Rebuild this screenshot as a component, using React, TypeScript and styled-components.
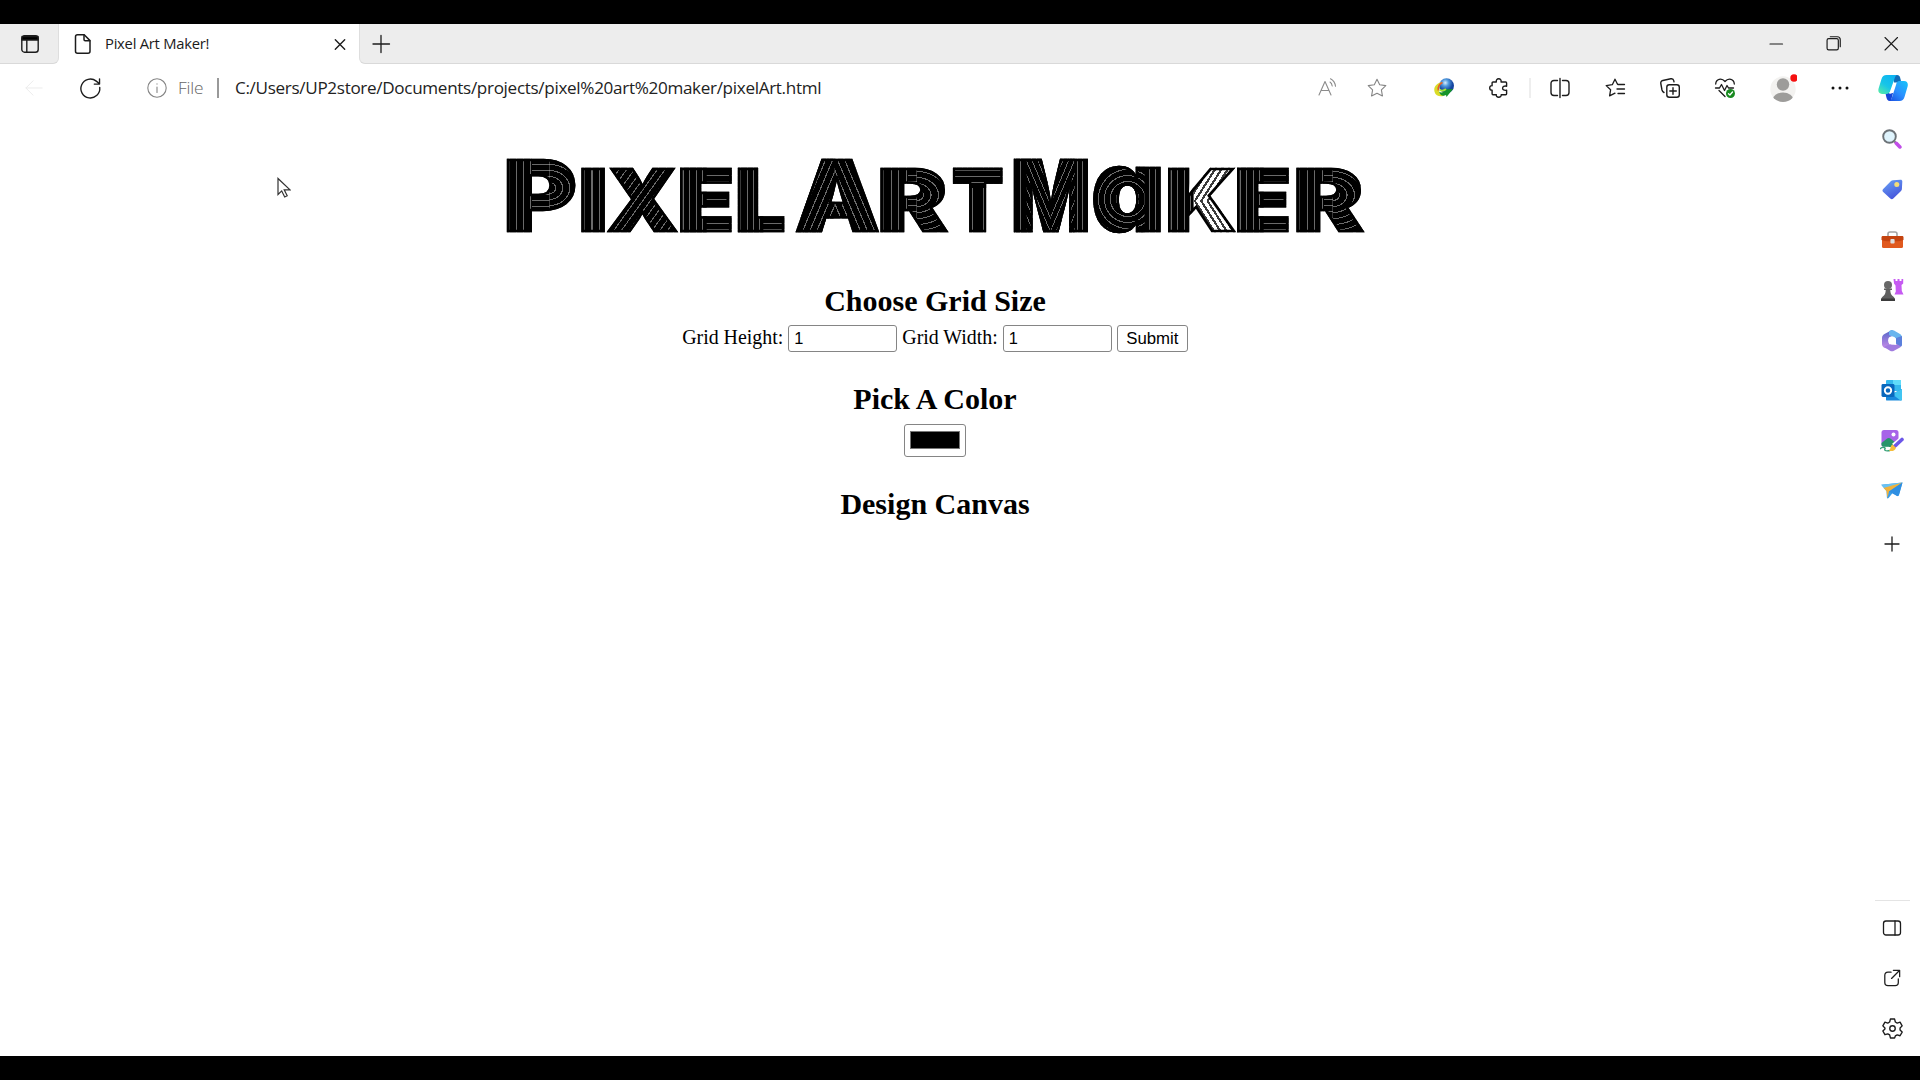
import React from "react";
import styled, { createGlobalStyle } from "styled-components";

const Global = createGlobalStyle`
  * { box-sizing: border-box; }
  body { margin: 0; background: #000; }
`;

const ui = `"Open Sans", "Noto Sans", sans-serif`;
const serif = `"Liberation Serif", "Times New Roman", serif`;
const sans = `"Liberation Sans", Arial, sans-serif`;

const Screen = styled.div`
  width: 1920px; height: 1080px; padding: 24px 0;
  background: #000; overflow: hidden;
`;
const Window = styled.div`
  height: 1032px; background: #fff;
  display: flex; flex-direction: column;
`;
const TabStrip = styled.header`
  height: 40px; flex: none; display: flex; background: #fff;
`;
const StripLeft = styled.div`
  width: 59px; background: #ededed; border-bottom: 1px solid #d9d9d9;
  border-right: 1px solid #dedede; border-radius: 0 0 6px 0;
  display: flex; align-items: center; justify-content: center; padding-left: 2px;
`;
const Tab = styled.div`
  width: 300px; background: #fff; display: flex; align-items: center;
  padding: 0 9px 0 14px; font: 400 14.8px ${ui}; color: #1b1b1b;
`;
const TabTitle = styled.span`
  margin-left: 12px; flex: 1; padding-bottom: 2px; letter-spacing: -0.26px; white-space: nowrap;
`;
const TabClose = styled.span`
  width: 20px; display: flex; justify-content: center;
`;
const StripRight = styled.div`
  flex: 1; background: #ededed; border-bottom: 1px solid #d9d9d9;
  border-left: 1px solid #dedede; border-radius: 0 0 0 6px;
  display: flex; align-items: center; justify-content: space-between; padding: 0 21px 0 11px;
`;
const Controls = styled.div`
  display: flex; align-items: center; gap: 42px;
`;
const Toolbar = styled.div`
  height: 48px; flex: none; display: flex; align-items: center; padding-left: 16px;
`;
const Slot = styled.span<{ $gap?: number }>`
  width: 30px; height: 30px; flex: none; margin-left: ${(p) => p.$gap ?? 0}px;
  display: flex; align-items: center; justify-content: center;
`;
const Scheme = styled.span`
  width: 30px; margin-left: 6px; padding-bottom: 2px; font: 300 17.3px ${ui}; color: #666; white-space: nowrap; letter-spacing: -0.2px;
`;
const Divider = styled.span<{ $gap: number; $tone: string; $w: number }>`
  width: ${(p) => p.$w}px; height: 20px; margin-left: ${(p) => p.$gap}px; background: ${(p) => p.$tone};
`;
const Address = styled.span`
  flex: 1; margin-left: 16px; padding-bottom: 2px; font: 400 17.1px ${ui}; color: #222; white-space: nowrap; letter-spacing: -0.32px;
`;
const ToolGroup = styled.div`
  display: flex; align-items: center; margin-right: 12px;
`;
const Body = styled.div`
  flex: 1; display: flex; min-height: 0;
`;
const Page = styled.main`
  width: 1870px; display: flex; flex-direction: column; align-items: center;
  font-family: ${serif}; color: #000; position: relative;
`;
const Title = styled.h1`
  margin: 31px 0 0; height: 93px; width: 858px; display: flex; align-items: baseline;
  font: 900 85px/92px Inter, Lato, sans-serif;
`;
const Word = styled.span`
  display: flex; align-items: baseline; flex: none;
`;
const Glyph = styled.span<{ $pitch: number; $stretch: number; $shift: number; $size?: number; $paint: string }>`
  display: block; flex: none; width: 95px; margin-right: ${(p) => p.$pitch - 95}px;
  font-size: ${(p) => p.$size ?? 85}px;
  transform: translateX(${(p) => p.$shift}px) scaleX(${(p) => p.$stretch}); transform-origin: 0 0;
  background: ${(p) => p.$paint};
  -webkit-background-clip: text; background-clip: text;
  color: transparent; -webkit-text-stroke: 2.5px #000;
  font-feature-settings: "cv11", "ss01";
`;
const Heading = styled.h2<{ $top: number }>`
  margin: ${(p) => p.$top}px 0 0; font: 700 30px/34px ${serif};
`;
const Form = styled.form`
  display: flex; align-items: center; height: 27px; margin-top: 7px;
  font-size: 19.9px; line-height: 27px; white-space: nowrap;
`;
const FieldLabel = styled.label`
  padding-bottom: 2px;
`;
const NumberBox = styled.input`
  width: 109px; height: 27px; margin: 0 5px; padding: 0 5px; border: 1px solid #858585; border-radius: 3px;
  background: #fff; color: #000; font: 16.4px ${sans}; outline: 0;
`;
const Submit = styled.button`
  width: 71px; height: 27px; padding: 0; border: 1px solid #858585; border-radius: 3px;
  background: #fff; color: #000; font: 16.8px ${sans};
`;
const ColorBox = styled.div`
  width: 62px; height: 33px; margin-top: 8px; padding: 6px 5px 7px;
  border: 1px solid #858585; border-radius: 3px; display: flex;
`;
const Swatch = styled.span`
  flex: 1; background: #000; border: 1px solid #777;
`;
const Pointer = styled.svg`
  position: absolute; left: 277px; top: 65px;
`;
const Sidebar = styled.aside`
  width: 50px; padding: 2px 6px 3px 0; display: flex; flex-direction: column; align-items: center;
`;
const SideSlot = styled.span<{ $h?: number }>`
  height: ${(p) => p.$h ?? 50}px; flex: none; display: flex; align-items: center; justify-content: center;
`;
const Rule = styled.span`
  width: 35px; height: 1px; background: #e4e4e4; margin: auto 0 2px;
`;

type IconProps = { s?: number; c?: string; w?: number; box?: number; children: React.ReactNode };
const Svg = styled.svg`
  overflow: visible; flex: none;
`;
const Icon = ({ s = 20, c = "#1c1c1c", w = 1.3, box = 20, children }: IconProps) => (
  <Svg width={s} height={s} viewBox={`0 0 ${box} ${box}`} fill="none" stroke={c} strokeWidth={w}
    strokeLinecap="round" strokeLinejoin="round">{children}</Svg>
);

const starPath = "M10 1.2l2.7 5.5 6.1.9-4.4 4.2 1 6.1L10 15.2l-5.4 2.7 1-6.1L1.2 7.6l6.1-.9z";

const Copilot = () => (
  <svg width="30" height="28" viewBox="0 0 30 28">
    <defs>
      <linearGradient id="cpA" x1="0" y1="1" x2=".7" y2="0"><stop stopColor="#5cf0a0" /><stop offset=".5" stopColor="#18c5e8" /><stop offset="1" stopColor="#0db4f2" /></linearGradient>
      <linearGradient id="cpB" x1="0" y1="1" x2=".8" y2="0"><stop stopColor="#1a4fe0" /><stop offset=".5" stopColor="#2b8fff" /><stop offset="1" stopColor="#19bdfb" /></linearGradient>
    </defs>
    <path d="M15 1h4c2.300 0 3 2 3.500 4l.8 3.500H16z" fill="#116cb8" />
    <path d="M7.500 19H15l-2 8h-1c-2.500 0-3.300-2-3.800-4.500z" fill="#1646d8" />
    <path d="M8.500 1H19c-1.500.6-2 2-2.500 3.800L12.500 16c-.6 2.500-1.800 4-4.500 4H4C.8 20-.2 17.500.6 14.500L3.500 5c.8-2.600 2.300-4 5-4z" fill="url(#cpA)" />
    <path d="M21.500 7H26c3.200 0 4.400 2.500 3.600 5.500L26.500 23c-.8 2.600-2.300 4-5 4H11.500c1.500-.6 2-2 2.500-3.800L18 11c.6-2.500 1.200-4 3.500-4z" fill="url(#cpB)" />
    <path d="M15.800 9.500H18c-.8 1-1 2-1.300 3L14.800 18c-.5 1-1.300 1.600-2.500 1.800H11c1-.8 1.500-2 2-3.500z" fill="#fff" />
  </svg>
);
const Download = () => (
  <svg width="20" height="20" viewBox="0 0 20 20">
    <defs><radialGradient id="globe" cx=".42" cy=".3"><stop stopColor="#d8efff" /><stop offset=".45" stopColor="#4f99dd" /><stop offset="1" stopColor="#1545a0" /></radialGradient></defs>
    <circle cx="12.500" cy="7.800" r="7.500" fill="url(#globe)" />
    <path d="M8 4C3 5-1 9 .6 14c1 4 5 5 9 4l1-3c-4 1-6 0-5.600-3C5 9 6 6 8 4z" fill="#d9dc28" />
    <path d="M8.500 4.500C5.500 6 3.700 9 4.300 12.500" stroke="#e85d2a" strokeWidth="1.500" fill="none" />
    <path d="M5 13.500c2 1.500 4 1 6-.5l-1-1.500 9-.5L12.500 19l-.5-2c-3 1.500-6 .5-7-3.500z" fill="#16942a" />
    <path d="M5.500 11.500c2 2 4 1.500 6.500-.5" stroke="#a4e534" strokeWidth="1.800" fill="none" />
  </svg>
);
const Search = () => (
  <svg width="20" height="20" viewBox="0 0 20 20">
    <path d="M12.500 12.500l2.200 2.200" stroke="#777" strokeWidth="2" />
    <path d="M14.300 14.300l3.600 3.600" stroke="#c14de8" strokeWidth="3.600" strokeLinecap="round" />
    <circle cx="7.500" cy="7.500" r="6.300" fill="#dff4fd" stroke="#6c7277" strokeWidth="1.900" />
  </svg>
);
const Tag = () => (
  <svg width="21" height="21" viewBox="0 0 21 21">
    <defs><linearGradient id="tag" x1="0" y1="0" x2=".5" y2="1"><stop stopColor="#6aa5f5" /><stop offset="1" stopColor="#4656dc" /></linearGradient></defs>
    <path d="M11 1.200L18.500.8c1.200 0 1.800.6 1.800 1.800l-.4 7.400c0 .8-.3 1.400-.9 2l-7.700 7.600c-1 1-2 1-3 0L1.200 13c-1-1-1-2 0-3L9 2c.6-.5 1.200-.8 2-.8z" fill="url(#tag)" />
    <circle cx="14.800" cy="5.500" r="2.500" fill="#f4dc78" />
  </svg>
);
const Toolbox = () => (
  <svg width="23" height="18" viewBox="0 0 23 18">
    <path d="M7 6V3c0-1.200.7-2 2-2h5c1.300 0 2 .8 2 2v3" fill="none" stroke="#a3a3a3" strokeWidth="1.600" />
    <rect x="1" y="5" width="21" height="12" rx="1.500" fill="#e0591e" />
    <path d="M.5 6.500c0-1 .5-1.500 1.500-1.500h19c1 0 1.500.5 1.500 1.500V9c-3 1-5 1.200-7 1.200h-8c-2 0-5-.2-7-1.200z" fill="#c4430f" />
    <rect x="9.400" y="8" width="4.200" height="4.500" rx="1" fill="#dedede" />
  </svg>
);
const Chess = () => (
  <svg width="24" height="24" viewBox="0 0 24 24">
    <path d="M13.500 1h2v2h2V1h2v2h2V1h1.700v4.500L21.500 7l.3 6 1.700 3.500h-9l1.300-3-.3-6-1.500-2z" fill="#c65af2" />
    <circle cx="8" cy="7" r="4" fill="#686868" />
    <path d="M4 10.500h8V12h-1.700c0 3 .7 5 3.500 7 .8.600 1.200 2.500.7 4h-13c-.5-1.500 0-3.400.7-4C5 17 5.700 15 5.700 12H4z" fill="#606060" />
    <path d="M1 20.500h14V23H1z" fill="#3b3b3b" />
  </svg>
);
const M365 = () => (
  <svg width="22" height="23" viewBox="0 0 22 23">
    <defs><linearGradient id="ma" x1="0" y1="0" x2="0" y2="1"><stop stopColor="#5366c8" /><stop offset="1" stopColor="#c58be8" /></linearGradient></defs>
    <path d="M11 1L3.500 5C1.800 6 1 7 1 9v6c0 2 1 3 2.500 3.800C6 20 8 18 8 16V9l7-4z" fill="url(#ma)" />
    <path d="M9 1.600c1.300-.8 2.700-.8 4 0L19 5c1.500 1 2 2 2 4v6c0 1-.3 2-1 2.500l-5-3V9.500L8 6V4c0-1 .3-1.900 1-2.400z" fill="#69b5ee" />
    <path d="M3 18l6-3 5.500 1L20.500 12v3c0 2-.6 3-2 3.800l-5.500 3c-1.300.7-2.700.7-4 0z" fill="#a07bdf" />
    <path d="M15 9l6-2v8c0 1-.4 2-1 2.500l-5-3z" fill="#5b80dc" />
    <circle cx="11" cy="11.500" r="3.900" fill="#fff" />
  </svg>
);
const Outlook = () => (
  <svg width="22" height="21" viewBox="0 0 22 21">
    <rect x="5" y="0" width="15" height="11" rx="1" fill="#36b9ee" /><rect x="12" y="0" width="8" height="5" fill="#60dcfa" />
    <path d="M5 9l8 4 8-4v10c0 1-.5 1.500-1.500 1.500H6c-1 0-1-.5-1-1.500z" fill="#1989dc" />
    <path d="M21 9v10c0 1-.5 1.500-1.500 1.500L11 14z" fill="#41c5f2" />
    <rect x=".5" y="4" width="13" height="13" rx="1.400" fill="#0968bd" />
    <circle cx="7" cy="10.500" r="3.200" fill="none" stroke="#fff" strokeWidth="1.900" />
  </svg>
);
const Designer = () => (
  <svg width="24" height="23" viewBox="0 0 24 23">
    <rect x="1.500" y="1" width="17" height="17" rx="2.500" fill="#a763e8" /><circle cx="13.500" cy="5.500" r="2" fill="#fff" />
    <path d="M1.500 14l5-4c1.500-1.200 3-1.200 4.500 0l6 5-3 3H4c-1.500 0-2.500-1-2.500-2.500z" fill="#27956a" />
    <path d="M0 19.300h9" stroke="#fff" strokeWidth="3" />
    <path d="M0 20c3-3 6-1 5 0s0 2.500 5 1.500" stroke="#36a178" strokeWidth="1.300" fill="none" />
    <path d="M22 10.500L14 17" stroke="#fff" strokeWidth="6" /><path d="M22 10.500L15 17" stroke="#6c57e8" strokeWidth="3.600" strokeLinecap="round" />
    <path d="M12.500 15.500l3.500 3.200c-.8 3-4 4-7 3 2-1.500 1-5 3.500-6.200z" fill="#f5bd3b" />
  </svg>
);
const Plane = () => (
  <svg width="22" height="17" viewBox="0 0 22 17">
    <path d="M.3 2.800L21.500.5 18 12.500c-.4 1.300-1.300 1.600-2.400 1l-4-2.500-4 5c-.8.700-1.600.500-1.700-.6L5.500 9z" fill="#3a9de8" />
    <path d="M.3 2.800L21.500.5 5.500 9z" fill="#69c2f4" /><path d="M2.500 6L21.500.5 8 9.500l-1.500 6.500L5.500 9z" fill="#f0b23c" /><path d="M21.500.5L8 9.500l8 4.500c1 .4 1.700 0 2-1z" fill="#2f8fe2" />
  </svg>
);

const line = "#000 0 5px, #6a6a6a 5px 6px";
const bars = `repeating-linear-gradient(90deg, ${line})`;
const rows = `repeating-linear-gradient(0deg, ${line})`;
const stemAndRows = `${bars} 0 0 / 27px 100% no-repeat, ${rows}`;
const bowl = (y: number, x: number) =>
  `${bars} 0 0 / 25px 100% no-repeat, ${rows} 25px 0 / ${x - 25}px 100% no-repeat, repeating-radial-gradient(circle at 0 ${y}px, ${line}) ${x}px 0 / 80px 100% no-repeat`;
const cross = `repeating-linear-gradient(124deg, ${line})`;
const peak = `repeating-linear-gradient(111deg, ${line}) 0 0 / 36px 100% no-repeat, repeating-linear-gradient(69deg, ${line})`;
const beam = `${rows} 0 0 / 100% 33px no-repeat, ${bars}`;
const valley = `${bars} 0 0 / 18px 100% no-repeat, repeating-linear-gradient(64deg, ${line}) 18px 0 / 28px 100% no-repeat, repeating-linear-gradient(116deg, ${line}) 46px 0 / 28px 100% no-repeat, ${bars}`;
const rings = `repeating-radial-gradient(circle at 37px 56px, ${line}) 0 0 / 54px 100% no-repeat, ${bars}`;
const chevron = "#fff 0 3px, #3c3c3c 3px 5px";
const arrow = `${bars} 0 0 / 26px 100% no-repeat, repeating-linear-gradient(120deg, ${chevron}) 26px 0 / 69px 46px no-repeat, repeating-linear-gradient(60deg, ${chevron}) 26px 46px / 69px 46px no-repeat`;

export default function App() {
  return (
    <Screen>
      <Global />
      <Window>
        <TabStrip>
          <StripLeft>
            <Icon s={18} box={18} w={1.4}><rect x=".8" y=".8" width="16.400" height="16.400" rx="2.800" /><path d="M1 1.500h16V5H1z" fill="#000" /><path d="M5.800 5v12" /></Icon>
          </StripLeft>
          <Tab>
            <Icon s={20} w={1.5}><path d="M4.500.8h6.700l5.800 5.800v10.600c0 1.200-.8 2-2 2h-10.500c-1.200 0-2-.8-2-2V2.800c0-1.200.8-2 2-2z" /><path d="M11 1v4.600c0 .8.400 1.200 1.200 1.200h4.600" /></Icon>
            <TabTitle>Pixel Art Maker!</TabTitle>
            <TabClose><Icon s={10} box={10} w={1.4}><path d="M.3.800l9.400 9.400M9.700.8L.3 10.200" /></Icon></TabClose>
          </Tab>
          <StripRight>
            <Icon s={20}><path d="M10 1.500v17M2 10h16.500" /></Icon>
            <Controls>
              <Icon s={16} box={16} w={1.200}><path d="M2 8h12.500" /></Icon>
              <Icon s={15} box={14} w={1.100}><rect x="1" y="2.500" width="10.500" height="10.500" rx="1.500" /><path d="M4 .7h6.500c1.800 0 2.800 1 2.800 2.800V10" /></Icon>
              <Icon s={16} box={16} w={1.100}><path d="M2 1.500l12.500 12.500M14.500 1.500L2 14" /></Icon>
            </Controls>
          </StripRight>
        </TabStrip>
        <Toolbar>
          <Slot $gap={3}><Icon s={18} c="#ececec" w={1.100}><path d="M19 10H1M9 2L1 10l8 8" /></Icon></Slot>
          <Slot $gap={26}><Icon s={21} w={1.300}><path d="M18.800 9A9 9 0 1 1 15.500 3L18.500 5.500M18.600.8v5h-5" /></Icon></Slot>
          <Slot $gap={37}><Icon s={20} c="#858585" w={1.100}><circle cx="10" cy="10" r="9.200" /><path d="M10 9v5.500M10 5.800v.3" /></Icon></Slot>
          <Scheme>File</Scheme>
          <Divider $gap={9} $tone="#999" $w={2} />
          <Address>C:/Users/UP2store/Documents/projects/pixel%20art%20maker/pixelArt.html</Address>
          <ToolGroup>
            <Slot><Icon s={20} c="#8c8c8c" w={1.100}><path d="M1 17L7 3.500 13 17M3 12.500h8M12 4c1.500 1 2 2.300 2.200 4M12.500.8c3.200 1.800 4.700 4.300 5 7.500" /></Icon></Slot>
            <Slot $gap={19}><Icon s={20} c="#858585" w={1.100}><path d={starPath} /></Icon></Slot>
            <Slot $gap={37}><Download /></Slot>
            <Slot $gap={25}><Icon s={20} w={1.400}><path d="M4 4h3.300C7 1.900 8 .8 9.700.8s2.700 1.100 2.400 3.200h4.600c.5 0 .9.400.9.900v3.300c-2.500-.5-4 .4-4 2s1.500 2.500 4 2v3.600c0 .5-.4.900-.9.900h-4.500c.2 1.500-.8 2.500-2.500 2.500s-2.700-1-2.400-2.500H4c-.5 0-.9-.4-.9-.9v-3.500C1.500 12.200.7 11.500.7 10s.8-2.500 2.400-2.300V4.900c0-.5.400-.9.900-.9z" /></Icon></Slot>
            <Divider $gap={15} $tone="#eeeeee" $w={2} />
            <Slot $gap={14}><Icon s={20} w={1.400}><path d="M7.500 2.500H4c-1.800 0-3 1.200-3 3v9c0 1.800 1.200 3 3 3h3.500M12.500 2.500H16c1.800 0 3 1.200 3 3v9c0 1.800-1.200 3-3 3h-3.500M10 .5v19" /></Icon></Slot>
            <Slot $gap={25}><Icon s={20} w={1.300}><path d="M12.500 6.300L10 1.200 7.300 6.700l-6.100.9 4.400 4.200-1 6.100L10 15.200M13 6.500h6.500M12 11h7.500M13 15.500h6.500" /></Icon></Slot>
            <Slot $gap={25}><Icon s={20} w={1.400}><rect x="6.800" y="6.800" width="12.500" height="12.500" rx="2.500" /><path d="M13 9.800v6.500M9.800 13h6.500M4 14.500c-1-.5-1.700-1.300-2-2.500L.8 5.500C.5 4 1.300 2.800 2.800 2.500l8-1.700c1.500-.3 2.700.500 3 2l.2 1" /></Icon></Slot>
            <Slot $gap={25}><Icon s={20} w={1.300}><path d="M.7 6C1 1 6.500-.5 10 3.500 13.500-.5 19 1 19.300 6M.5 10h4l2-3.500 3 6 2.500-5 1.500 2.500h5M4 12.500l6 6" /><circle cx="15.500" cy="15.500" r="4.500" fill="#188a20" stroke="none" /><path d="M13.500 15.700l1.400 1.300 2.600-3" stroke="#fff" /></Icon></Slot>
            <Slot $gap={28}>
              <svg width="28" height="28" viewBox="0 0 28 28"><defs><clipPath id="av"><circle cx="14" cy="15" r="13" /></clipPath></defs><circle cx="14" cy="15" r="12.700" fill="#f3f2f0" /><circle cx="14" cy="10.500" r="6.200" fill="#9d9c9a" /><ellipse cx="14" cy="26" rx="10.500" ry="7.500" fill="#9d9c9a" clipPath="url(#av)" /><circle cx="25" cy="4" r="3.700" fill="#f51010" /></svg>
            </Slot>
            <Slot $gap={27}><svg width="18" height="4" viewBox="0 0 18 4" fill="#111"><circle cx="2" cy="2" r="1.500" /><circle cx="9" cy="2" r="1.500" /><circle cx="16" cy="2" r="1.500" /></svg></Slot>
            <Slot $gap={23}><Copilot /></Slot>
          </ToolGroup>
        </Toolbar>
        <Body>
          <Page>
            <Title aria-label="Pixel Art Maker">
              <Word>
                <Glyph $pitch={75} $stretch={1.16} $shift={-3} $size={97} $paint={bowl(38, 40)}>P</Glyph>
                <Glyph $pitch={26} $stretch={1.22} $shift={-3} $paint={bars}>I</Glyph>
                <Glyph $pitch={73} $stretch={1.06} $shift={0} $paint={cross}>X</Glyph>
                <Glyph $pitch={58} $stretch={1.1} $shift={-3} $paint={stemAndRows}>E</Glyph>
                <Glyph $pitch={57} $stretch={1.05} $shift={-3} $paint={stemAndRows}>L</Glyph>
              </Word>
              <Word>
                <Glyph $pitch={85} $stretch={1.1} $shift={0} $size={97} $paint={peak}>A</Glyph>
                <Glyph $pitch={72} $stretch={1.24} $shift={-3} $paint={bowl(40, 32)}>R</Glyph>
                <Glyph $pitch={62} $stretch={0.88} $shift={0} $paint={beam}>T</Glyph>
              </Word>
              <Word>
                <Glyph $pitch={79} $stretch={0.86} $shift={-3} $size={97} $paint={valley}>M</Glyph>
                <Glyph $pitch={75} $stretch={0.99} $shift={-2} $size={116} $paint={rings}>a</Glyph>
                <Glyph $pitch={69} $stretch={1.1} $shift={-3} $paint={arrow}>K</Glyph>
                <Glyph $pitch={59} $stretch={1.1} $shift={-3} $paint={stemAndRows}>E</Glyph>
                <Glyph $pitch={68} $stretch={1.24} $shift={-3} $paint={bowl(40, 32)}>R</Glyph>
              </Word>
            </Title>
            <Heading $top={48}>Choose Grid Size</Heading>
            <Form onSubmit={(e) => e.preventDefault()}>
              <FieldLabel>Grid Height:</FieldLabel>
              <NumberBox defaultValue="1" />
              <FieldLabel>Grid Width:</FieldLabel>
              <NumberBox defaultValue="1" />
              <Submit>Submit</Submit>
            </Form>
            <Heading $top={30}>Pick A Color</Heading>
            <ColorBox><Swatch /></ColorBox>
            <Heading $top={30}>Design Canvas</Heading>
            <Pointer width="14" height="22" viewBox="0 0 14 22"><path d="M1 1.500v16l3.700-3.600 3 6.100 2.500-1.200-3-6H13z" fill="#fff" stroke="#333" strokeWidth="1.200" /></Pointer>
          </Page>
          <Sidebar>
            <SideSlot><Search /></SideSlot>
            <SideSlot $h={51}><Tag /></SideSlot>
            <SideSlot><Toolbox /></SideSlot>
            <SideSlot><Chess /></SideSlot>
            <SideSlot><M365 /></SideSlot>
            <SideSlot><Outlook /></SideSlot>
            <SideSlot><Designer /></SideSlot>
            <SideSlot><Plane /></SideSlot>
            <SideSlot $h={58}><Icon s={16} box={16} w={1.300}><path d="M8 1v14M1 8h14" /></Icon></SideSlot>
            <Rule />
            <SideSlot><Icon s={20} w={1.300}><rect x="1.500" y="3" width="17" height="14" rx="2.500" /><path d="M13 3v14" /></Icon></SideSlot>
            <SideSlot><Icon s={18} w={1.400}><path d="M9 3.500H5.500c-2.200 0-3.500 1.300-3.500 3.500v8c0 2.200 1.300 3.500 3.500 3.500h8c2.200 0 3.500-1.300 3.500-3.500v-4M11.500 1.500h7v7M18 2l-8.500 8.500" /></Icon></SideSlot>
            <SideSlot><Icon s={21} w={1.300}><path d="M8 1h4l.7 2.800 1.800 1 2.700-.8 2 3.500-2 2v1.900l2 2-2 3.500-2.700-.8-1.800 1L12 19H8l-.7-2.900-1.800-1-2.700.8-2-3.500 2-2V9.500l-2-2 2-3.500 2.700.8 1.800-1z" /><circle cx="10" cy="10" r="2.600" /></Icon></SideSlot>
          </Sidebar>
        </Body>
      </Window>
    </Screen>
  );
}
